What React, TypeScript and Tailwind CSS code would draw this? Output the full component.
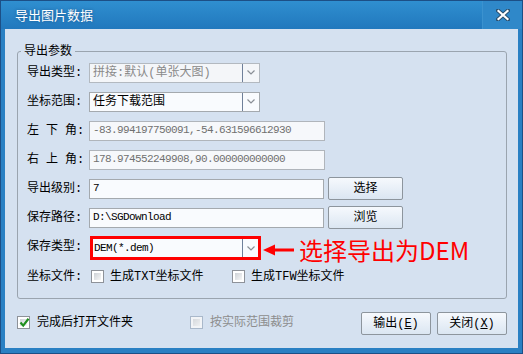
import React from 'react';

const mono = "font-['Liberation_Mono','Noto_Sans_CJK_SC',monospace]";

function Chevron() {
  return (
    <svg width="8" height="5" viewBox="0 0 8 5" className="block">
      <polyline points="0.5,0.5 4,4 7.5,0.5" fill="none" stroke="#8a8f96" strokeWidth="1.2" />
    </svg>
  );
}

function Select({ text, disabled }: { text: string; disabled?: boolean }) {
  return (
    <div className={`w-[171px] h-[20px] flex border ${disabled ? 'border-[#b3b9c0] bg-[#f4f6f9]' : 'border-[#a4a9ae] bg-[#f9fbfe]'}`}>
      <div className={`flex-1 flex items-center pl-[3px] text-[12px] leading-none ${disabled ? 'text-[#8a8a8a]' : 'text-black'}`}>
        {text}
      </div>
      <div className="w-[17px] border-l border-[#6f809a] flex items-center justify-center">
        <Chevron />
      </div>
    </div>
  );
}

function Field({ value, disabled, w }: { value: string; disabled?: boolean; w: string }) {
  return (
    <div className={`${w} h-[20px] flex items-center pl-[3px] border ${disabled ? 'border-[#b0b5bb] bg-[#f6f8fb] text-[#707070]' : 'border-[#a4a9ae] bg-[#f9fbfe] text-black'}`}>
      <span className="font-['Liberation_Mono',monospace] text-[11px] tracking-[-0.6px] leading-none whitespace-nowrap">{value}</span>
    </div>
  );
}

function Button({ children, w }: { children: React.ReactNode; w: string }) {
  return (
    <div className={`${w} h-[23px] shrink-0 flex items-center justify-center border border-[#8d959d] rounded-[2px] bg-gradient-to-b from-[#f6f9fd] to-[#dbe6f2] text-[12px] text-black leading-none`}>
      {children}
    </div>
  );
}

function Check({ checked, disabled }: { checked?: boolean; disabled?: boolean }) {
  return (
    <div className={`relative w-[13px] h-[13px] shrink-0 border p-[2px] ${disabled ? 'border-[#a9b8ca] bg-[#f2f4f7]' : 'border-[#8e9299] bg-white'}`}>
      <div className={`w-full h-full bg-gradient-to-br ${disabled ? 'from-[#d6d9dd] to-[#eef0f2]' : 'from-[#cdd1d6] to-[#f7f7f7]'}`} />
      {checked && (
        <svg width="11" height="11" viewBox="0 0 11 11" className="absolute left-[1px] top-[0px]">
          <path d="M1.5 5.5 L4.2 8.6 L9.5 1.8" fill="none" stroke="#1f8f1f" strokeWidth="2.2" />
        </svg>
      )}
    </div>
  );
}

function Label({ children }: { children: React.ReactNode }) {
  return <div className="w-[62px] shrink-0 text-[12px] leading-none text-black">{children}</div>;
}

function SpacedLabel({ chars }: { chars: string[] }) {
  return (
    <div className="w-[62px] shrink-0 flex text-[12px] leading-none text-black">
      <div className="w-[50px] flex justify-between">
        {chars.map((c) => (
          <span key={c}>{c}</span>
        ))}
      </div>
      <span>:</span>
    </div>
  );
}

export default function App() {
  return (
    <div className={`w-[523px] h-[354px] flex flex-col border border-[#1c4f86] bg-[#2a80c3] ${mono}`}>
      {/* title bar */}
      <div className="h-[28px] shrink-0 flex items-center bg-gradient-to-b from-[#2f8fd0] to-[#2178bd]">
        <div className="pl-[14px] pb-[2px] font-['Noto_Sans_CJK_SC',sans-serif] text-[13px] leading-none text-white [text-shadow:0_0_3px_rgba(20,60,110,0.6)]">
          导出图片数据
        </div>
        <div className="ml-auto w-[40px] h-full flex items-center justify-center bg-[#2f88c9] border-l border-[#3b92cf]">
          <svg width="14" height="12" viewBox="0 0 14 12">
            <path d="M2 1.5 L12 10.5 M12 1.5 L2 10.5" stroke="#2a4f6e" strokeWidth="4" strokeLinecap="square" />
            <path d="M2.5 2 L11.5 10 M11.5 2 L2.5 10" stroke="#ffffff" strokeWidth="2.2" strokeLinecap="square" />
          </svg>
        </div>
      </div>

      {/* client */}
      <div className="flex-1 mx-[4px] mb-[5px] bg-[#d5e1f0] flex flex-col">
        <div className="relative ml-[12px] mt-[22px] w-[490px] h-[248px] border border-[#9aa4af] rounded-[3px] pt-[6px] pl-[9px]">
          <div className="absolute left-[3px] top-[-7px] px-[3px] bg-[#d5e1f0] text-[12px] leading-[14px] text-black">
            导出参数
          </div>

          <div className="h-[29px] flex items-center">
            <Label>导出类型:</Label>
            <Select text="拼接:默认(单张大图)" disabled />
          </div>
          <div className="h-[29px] flex items-center">
            <Label>坐标范围:</Label>
            <Select text="任务下载范围" />
          </div>
          <div className="h-[29px] flex items-center">
            <SpacedLabel chars={['左', '下', '角']} />
            <Field w="w-[236px]" value="-83.994197750091,-54.631596612930" disabled />
          </div>
          <div className="h-[29px] flex items-center">
            <SpacedLabel chars={['右', '上', '角']} />
            <Field w="w-[236px]" value="178.974552249908,90.000000000000" disabled />
          </div>
          <div className="h-[29px] flex items-center">
            <Label>导出级别:</Label>
            <Field w="w-[235px]" value="7" />
            <div className="ml-[4px]">
              <Button w="w-[75px]">选择</Button>
            </div>
          </div>
          <div className="h-[29px] flex items-center">
            <Label>保存路径:</Label>
            <Field w="w-[235px]" value="D:\SGDownload" />
            <div className="ml-[4px]">
              <Button w="w-[75px]">浏览</Button>
            </div>
          </div>
          <div className="h-[29px] flex items-center">
            <Label>保存类型:</Label>
            <div className="ml-px w-[171px] h-[24px] mt-[3px] flex border-[3px] border-[#ff0000] bg-[#f9fbfe]">
              <div className="flex-1 flex items-center pl-[1px]">
                <span className="font-['Liberation_Mono',monospace] text-[11px] tracking-[-0.6px] leading-none text-black">DEM(*.dem)</span>
              </div>
              <div className="w-[16px] border-l border-[#6f809a] flex items-center justify-center">
                <Chevron />
              </div>
            </div>
            <div className="flex items-center translate-y-[3px]">
              <svg width="32" height="12" viewBox="0 0 32 12" className="ml-[2px] block">
                <polygon points="0,6 12,0.5 12,11.5" fill="#ff0000" />
                <rect x="11" y="4.5" width="20" height="3" fill="#ff0000" />
              </svg>
              <span className="ml-[4px] font-['Noto_Sans_CJK_SC',sans-serif] text-[24px] leading-[24px] text-[#ff0000]">
                选择导出为DEM
              </span>
            </div>
          </div>
          <div className="h-[29px] flex items-center pt-[2px]">
            <Label>坐标文件:</Label>
            <div className="w-[141px] flex items-center ml-[2px]">
              <Check />
              <span className="ml-[6px] text-[12px] leading-none">生成TXT坐标文件</span>
            </div>
            <Check />
            <span className="ml-[6px] text-[12px] leading-none">生成TFW坐标文件</span>
          </div>
        </div>

        <div className="flex-1 flex items-center pl-[12px] pr-[11px]">
          <div className="w-[173px] flex items-center -translate-y-[1px]">
            <Check checked />
            <span className="ml-[7px] text-[12px] leading-none text-black">完成后打开文件夹</span>
          </div>
          <div className="flex items-center -translate-y-[1px]">
            <Check disabled />
            <span className="ml-[7px] text-[12px] leading-none text-[#8d8d8d]">按实际范围裁剪</span>
          </div>
          <div className="ml-auto flex gap-[6px]">
            <Button w="w-[70px]">
              输出(<span className="underline">E</span>)
            </Button>
            <Button w="w-[70px]">
              关闭(<span className="underline">X</span>)
            </Button>
          </div>
        </div>
      </div>
    </div>
  );
}
